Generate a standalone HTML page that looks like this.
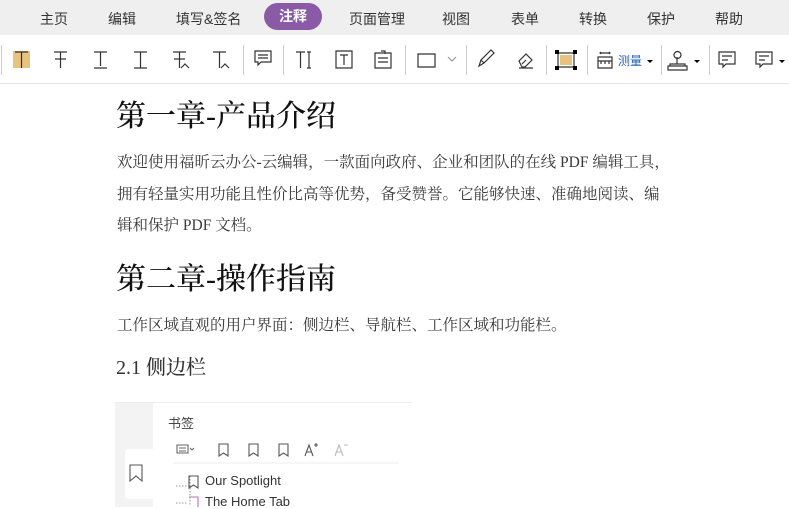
<!DOCTYPE html>
<html><head><meta charset="utf-8"><style>
*{margin:0;padding:0;box-sizing:border-box}
body{width:789px;height:506px;overflow:hidden;background:#fff;font-family:"Liberation Sans","Noto Sans CJK SC",sans-serif;position:relative}
.tabs{position:absolute;left:0;top:0;width:789px;height:35px;background:#efefef}
.tab{position:absolute;top:9px;font-size:14px;color:#333}
.act{position:absolute;left:264px;top:3px;width:58px;height:27px;border-radius:14px;background:#8a5aa6;color:#fff;font-size:14px;font-weight:bold;text-align:center;line-height:27px}
.tb{position:absolute;left:0;top:35px;width:789px;height:49px;background:#fff;border-bottom:1px solid #e6e6e6}
.sep{position:absolute;top:10px;width:1px;height:30px;background:#ccc}
svg{position:absolute}
.doc{position:absolute;font-family:"Liberation Serif","Noto Serif CJK SC",serif;color:#111;font-weight:500}
.p{position:absolute;left:117px;font-family:"Liberation Serif","Noto Serif CJK SC",serif;font-size:15.5px;color:#3a3a3a;white-space:nowrap;letter-spacing:0px}
</style></head><body>
<div class="tabs">
<span class="tab" style="left:40px">主页</span>
<span class="tab" style="left:108px">编辑</span>
<span class="tab" style="left:176px">填写&amp;签名</span>
<div class="act">注释</div>
<span class="tab" style="left:349px">页面管理</span>
<span class="tab" style="left:442px">视图</span>
<span class="tab" style="left:511px">表单</span>
<span class="tab" style="left:579px">转换</span>
<span class="tab" style="left:647px">保护</span>
<span class="tab" style="left:715px">帮助</span>
</div>
<div class="tb">
<div class="sep" style="left:1px"></div>
<div style="position:absolute;left:13px;top:16px;width:17px;height:17px;background:#e8c27f"></div>
<svg width="789" height="49" style="left:0;top:0" fill="none" stroke="#333" stroke-width="1.2">
<path d="M15 17h13M21.5 17v16"/>
<path d="M54 17h13M60.5 17v16M55 24h11"/>
<path d="M94 17h13M100.5 17v14M94 33h13" />
<path d="M134 17h13M140.5 17v16M134 33h13"/>
<path d="M173 17h13M179.5 17v16M174 24h11M181 33l4-4 4 4"/>
<path d="M213 17h13M219.5 17v16M221 33l4-4 4 4"/>
<path d="M255 16h16v11h-10l-3 3v-3h-3zM258 20h10M258 23h10"/>
<path d="M296 17h9M300.5 17v16M309 17v16M307 17h4M307 33h4"/>
<path d="M336 16h16v17h-16zM340 20h8M344 20v10"/>
<path d="M375 18h16v15h-16zM381 16h4v3M378 23h10M378 27h10"/>
<path d="M418 19h17v13h-17z"/>
<path d="M448 22l4 4 4-4" stroke="#999"/>
<path d="M479 31l2-6 10-10 3 3-10 10zM481 25l3 3"/>
<path d="M519 26l7-7 6 6-7 7h-3zM522 29l4-4M519 33h14"/>
<path d="M558 18h16v14h-16z"/>
<path d="M598 22h14v11h-14zM598 26h14M601 26v3M605 26v3M609 26v3M600 18h10M601 17l-1 1 1 1M609 17l1 1-1 1"/>
<path d="M668 31h19v4h-19zM670 31v-2h15v2M677 29v-7M674 20a3.5 3.5 0 1 1 7 0 3.5 3.5 0 0 1-7 0"/>
<path d="M719 17h16v12h-9l-3 3v-3h-4zM722 21h10M722 25h6"/>
<path d="M756 17h16v12h-9l-3 3v-3h-4zM759 21h10M759 25h6"/>
</svg>
<svg width="789" height="49" style="left:0;top:0" fill="#000" stroke="none">
<rect x="555" y="15" width="4" height="4"/><rect x="573" y="15" width="4" height="4"/><rect x="555" y="31" width="4" height="4"/><rect x="573" y="31" width="4" height="4"/>
<rect x="560" y="20" width="12" height="10" fill="#e8c27f"/>
<path d="M647 25h6l-3 3z M694 25h6l-3 3z M779 25h6l-3 3z"/>
</svg>
<span style="position:absolute;left:618px;top:17px;font-size:12px;color:#2a64b8">测量</span>
<div class="sep" style="left:243px"></div><div class="sep" style="left:283px"></div><div class="sep" style="left:405px"></div>
<div class="sep" style="left:466px"></div><div class="sep" style="left:546px"></div><div class="sep" style="left:587px"></div>
<div class="sep" style="left:661px"></div><div class="sep" style="left:709px"></div>
</div>
<div class="doc" style="left:116px;top:91px;font-size:30px">第一章-产品介绍</div>
<div class="p" style="top:150px">欢迎使用福昕云办公-云编辑，一款面向政府、企业和团队的在线 PDF 编辑工具，</div>
<div class="p" style="top:182px">拥有轻量实用功能且性价比高等优势，备受赞誉。它能够快速、准确地阅读、编</div>
<div class="p" style="top:213px">辑和保护 PDF 文档。</div>
<div class="doc" style="left:116px;top:254px;font-size:30px">第二章-操作指南</div>
<div class="p" style="top:313px">工作区域直观的用户界面：侧边栏、导航栏、工作区域和功能栏。</div>
<div class="doc" style="left:116px;top:351px;font-size:20px;color:#333">2.1 侧边栏</div>
<div style="position:absolute;left:115px;top:402px;width:297px;height:104px;background:#fff;border-top:1px solid #eee">
<div style="position:absolute;left:0;top:0;width:38px;height:104px;background:#f3f3f3"></div>
<div style="position:absolute;left:10px;top:46px;width:30px;height:50px;background:#fff;border-radius:4px 0 0 4px"></div>
<svg width="297" height="104" style="left:0;top:0" fill="none" stroke="#555" stroke-width="1.1">
<path d="M15 62h12v16l-6-5-6 5z"/>
<path d="M62 42h11v8h-11zM64 45h7M64 48h7M75 45l2 2 2-2" stroke="#666"/>
<path d="M104 41h9v12l-4.5-3-4.5 3zM134 41h9v12l-4.5-3-4.5 3zM164 41h9v12l-4.5-3-4.5 3z"/>
<path d="M190 53l4-11 4 11M191.5 49h5M199 42h4M201 40v4"/>
<path d="M220 53l4-11 4 11M221.5 49h5M229 42h4" stroke="#bbb"/>
<path d="M58 60h226" stroke="#eee"/>
<path d="M75 73v30M61 83h12M61 100h12" stroke="#999" stroke-dasharray="1.5 1.5"/>
<path d="M74 73h9v12l-4.5-3-4.5 3z"/>
<path d="M74 94h9v12" stroke="#c56ab8"/>
</svg>
<span style="position:absolute;left:53px;top:10px;font-size:13px;color:#444">书签</span>
<span style="position:absolute;left:90px;top:70px;font-size:13px;color:#333">Our Spotlight</span>
<span style="position:absolute;left:90px;top:91px;font-size:13px;color:#333">The Home Tab</span>
</div>
</body></html>
